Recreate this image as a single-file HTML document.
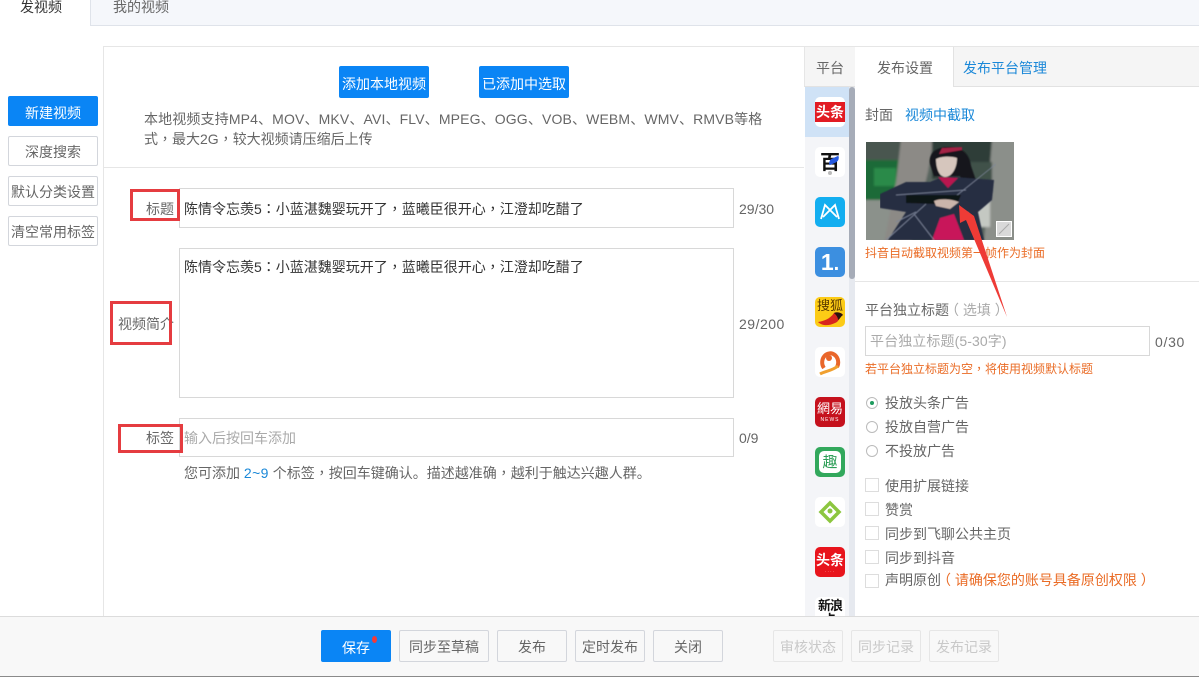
<!DOCTYPE html>
<html lang="zh-Hans"><head><meta charset="utf-8"><title>发视频</title>
<style>
html,body{margin:0;padding:0;background:#fff}
#p{position:relative;width:1199px;height:677px;overflow:hidden;background:#fff;font:14px/20px "Liberation Sans","Noto Sans CJK SC",sans-serif;color:#666}
#p div{position:absolute;box-sizing:border-box}
.t{white-space:nowrap}
.q{font-family:"Noto Sans CJK TC",sans-serif}
.btn{text-align:center;border-radius:2px;border:1px solid #d3d6dc;color:#666;white-space:nowrap}
.blue{background:#0a85f5;color:#fff;border:0}
.inp{border:1px solid #d8d8d8;background:#fff}
.red{border:3px solid #e53c40}
.ic{width:30px;height:30px;border-radius:5px;left:815px;text-align:center;font-weight:bold;overflow:hidden;white-space:nowrap}
.off{color:#c9c9c9;border-color:#e6e6e6}
.r{width:12px;height:12px;border:1px solid #bbb;border-radius:50%;left:866px;background:#fff}
.c{width:14px;height:14px;border:1px solid #ddd;left:865px;background:#fff}
.org{color:#ea6c26}
</style></head><body><div id="p">
<!-- top tabs -->
<div style="left:90px;top:0;width:1109px;height:26px;background:#f5f7fb;border-left:1px solid #dfe3ea;border-bottom:1px solid #dfe3ea"></div>
<div class="t" style="left:20px;top:-3px;color:#333">发视频</div>
<div class="t" style="left:113px;top:-3px">我的视频</div>
<!-- left buttons -->
<div class="btn blue" style="left:8px;top:96px;width:90px;height:30px;line-height:34px">新建视频</div>
<div class="btn" style="left:8px;top:136px;width:90px;height:30px;line-height:30px">深度搜索</div>
<div class="btn" style="left:8px;top:176px;width:90px;height:30px;line-height:30px">默认分类设置</div>
<div class="btn" style="left:8px;top:216px;width:90px;height:30px;line-height:30px">清空常用标签</div>
<!-- main panel -->
<div style="left:103px;top:46px;width:1096px;height:571px;border-left:1px solid #e6e6e6;border-top:1px solid #e6e6e6"></div>
<div class="btn blue" style="left:339px;top:66px;width:90px;height:32px;line-height:36px">添加本地视频</div>
<div class="btn blue" style="left:479px;top:66px;width:90px;height:32px;line-height:36px">已添加中选取</div>
<div class="t" style="left:144px;top:109px;letter-spacing:.14px">本地视频支持MP4、MOV、MKV、AVI、FLV、MPEG、OGG、VOB、WEBM、WMV、RMVB等格</div>
<div class="t" style="left:144px;top:129px">式<span class="q" lang="zh-TW">，</span>最大2G<span class="q" lang="zh-TW">，</span>较大视频请压缩后上传</div>
<div style="left:104px;top:167px;width:700px;height:1px;background:#e6e6e6"></div>
<!-- form -->
<div class="inp" style="left:179px;top:188px;width:555px;height:40px"></div>
<div class="t" style="left:184px;top:199px;color:#333">陈情令忘羡5<span class="q" lang="zh-TW">：</span>小蓝湛魏婴玩开了<span class="q" lang="zh-TW">，</span>蓝曦臣很开心<span class="q" lang="zh-TW">，</span>江澄却吃醋了</div>
<div class="t" style="left:739px;top:199px">29/30</div>
<div class="inp" style="left:179px;top:248px;width:555px;height:150px"></div>
<div class="t" style="left:184px;top:257px;color:#333">陈情令忘羡5<span class="q" lang="zh-TW">：</span>小蓝湛魏婴玩开了<span class="q" lang="zh-TW">，</span>蓝曦臣很开心<span class="q" lang="zh-TW">，</span>江澄却吃醋了</div>
<div class="t" style="left:739px;top:314px;letter-spacing:.5px">29/200</div>
<div class="inp" style="left:179px;top:418px;width:555px;height:39px"></div>
<div class="t" style="left:184px;top:428px;color:#aaa">输入后按回车添加</div>
<div class="t" style="left:739px;top:428px">0/9</div>
<div class="t" style="left:184px;top:463px">您可添加 <span style="color:#1a88d8;letter-spacing:.4px">2~9</span> 个标签<span class="q" lang="zh-TW">，</span>按回车键确认。描述越准确<span class="q" lang="zh-TW">，</span>越利于触达兴趣人群。</div>
<div class="t" style="left:146px;top:199px">标题</div>
<div class="t" style="left:118px;top:314px">视频简介</div>
<div class="t" style="left:146px;top:428px">标签</div>
<div class="red" style="left:130px;top:189px;width:50px;height:32px"></div>
<div class="red" style="left:110px;top:301px;width:62px;height:44px"></div>
<div class="red" style="left:118px;top:424px;width:65px;height:29px"></div>
<!-- right header -->
<div style="left:804px;top:47px;width:395px;height:40px;background:#f5f5f5;border-bottom:1px solid #e2e2e2;border-left:1px solid #e6e6e6"></div>
<div style="left:855px;top:47px;width:99px;height:40px;background:#fff;border-right:1px solid #e2e2e2"></div>
<div class="t" style="left:816px;top:58px">平台</div>
<div class="t" style="left:877px;top:58px">发布设置</div>
<div class="t" style="left:963px;top:58px;color:#1a88d8">发布平台管理</div>
<!-- platform column -->
<div style="left:805px;top:87px;width:45px;height:530px;background:#f4f5f8"></div>
<div style="left:805px;top:87px;width:44px;height:50px;background:#cfe2f6"></div>
<div style="left:849px;top:87px;width:6px;height:530px;background:#e6e9ef"></div>
<div style="left:849px;top:87px;width:6px;height:192px;background:#a6acb8;border-radius:3px"></div>
<!-- icons -->
<div class="ic" style="top:97px;background:#fff"><div style="left:0;top:5px;width:30px;height:20px;background:#e21b23;color:#fff;font-size:14px;line-height:20px">头条</div></div>
<div class="ic" style="top:147px;background:#fff"><div style="left:0;top:3px;width:30px;color:#111;font:bold 20px/22px 'Noto Sans CJK SC',sans-serif">百</div><div style="left:13px;top:11px;width:12px;height:5px;background:#2458e0;border-radius:6px 0;transform:rotate(-25deg)"></div><div style="left:13px;top:24px;width:4px;height:4px;border-radius:50%;background:#bbb"></div></div>
<div class="ic" style="top:197px;background:#13aef0"><svg style="position:absolute;left:0;top:0" width="30" height="30"><path d="M6 22L10 8L15 13L20 8L24 22M10 8L22 20M20 8L8 20" fill="none" stroke="#fff" stroke-width="1.8"/></svg></div>
<div class="ic" style="top:247px;background:#3c8fe0;color:#fff;font:bold 23px/30px 'Liberation Sans',sans-serif">1<span style="font-size:20px">.</span></div>
<div class="ic" style="top:297px;background:#fccb16"><div style="left:0;top:1px;width:30px;color:#5a3a00;font-size:13px;line-height:15px;font-weight:normal">搜狐</div><svg style="position:absolute;left:0;top:0" width="30" height="30"><path d="M3 25C9 24 15 22 19 16C21 15 26 15 28 18C25 19 24 25 20 26C14 29 7 29 3 25Z" fill="#d8261c"/><path d="M19 16C21 15 26 15 28 18C26 19 25 22 23 23C23 20 21 18 19 16Z" fill="#2a1410"/></svg></div>
<div class="ic" style="top:347px;background:#fff"><svg style="position:absolute;left:0;top:0" width="30" height="30"><path d="M9 21A8 9 0 1 1 22 20" fill="none" stroke="#e9662a" stroke-width="4"/><circle cx="14" cy="11" r="3" fill="#e9662a"/><path d="M5 27C10 24 17 24 23 19" fill="none" stroke="#f0a030" stroke-width="3"/></svg></div>
<div class="ic" style="top:397px;background:#c5111d;color:#fff"><div style="left:0;top:3px;width:30px;font-size:13px;line-height:18px;font-weight:normal">網易</div><div style="left:0;top:20px;width:30px;font:5px/7px 'Liberation Sans',sans-serif;letter-spacing:1px">NEWS</div></div>
<div class="ic" style="top:447px;background:#32a85c"><div style="left:4px;top:4px;width:22px;height:22px;background:#fff;border-radius:5px;color:#2d9e57;font:normal 15px/22px 'Noto Sans CJK SC',sans-serif">趣</div></div>
<div class="ic" style="top:497px;background:#fff"><svg style="position:absolute;left:0;top:0" width="30" height="30"><path d="M15 6L24 15L15 24L6 15Z" fill="none" stroke="#8cc63f" stroke-width="3.5"/><circle cx="15" cy="14" r="2.5" fill="#8cc63f"/></svg></div>
<div class="ic" style="top:547px;background:#e8141c;color:#fff"><div style="left:0;top:3px;width:30px;font-size:14px;line-height:20px">头条</div><div style="left:0;top:22px;width:30px;font:5px/6px 'Liberation Sans',sans-serif;letter-spacing:1px;color:#ffb0b0">····</div></div>
<div class="ic" style="top:597px;height:20px;background:#fff;border-radius:5px 5px 0 0;color:#111"><div style="left:0;top:1px;width:30px;font-size:13px;line-height:15px;letter-spacing:-1px">新浪</div><div style="left:0;top:15px;width:30px;font-size:13px;line-height:15px">卡</div></div>
<!-- settings -->
<div class="t" style="left:865px;top:105px">封面</div>
<div class="t" style="left:905px;top:105px;color:#1a88d8">视频中截取</div>
<svg style="position:absolute;left:866px;top:142px" width="148" height="98" viewBox="0 0 148 98">
<defs><filter id="b" x="0" y="0" width="100%" height="100%"><feGaussianBlur stdDeviation="1.1"/></filter><filter id="s" x="0" y="0" width="100%" height="100%"><feGaussianBlur stdDeviation=".5"/></filter><clipPath id="k"><rect width="148" height="98"/></clipPath></defs>
<g clip-path="url(#k)">
<g filter="url(#b)">
<rect x="-3" y="-3" width="154" height="104" fill="#59655e"/>
<rect x="-3" y="-3" width="50" height="25" fill="#4a5750"/>
<rect x="-3" y="18" width="42" height="40" fill="#1c6b38"/>
<rect x="8" y="26" width="22" height="18" fill="#2a8a48"/>
<rect x="-3" y="58" width="34" height="44" fill="#8b918b"/>
<path d="M35 -3H68L62 30L45 101H18L30 40Z" fill="#8c8a86"/>
<rect x="66" y="-3" width="62" height="40" fill="#2d3d38"/>
<path d="M126 -3H151V101H118Z" fill="#8b8f8a"/>
<rect x="106" y="55" width="18" height="30" fill="#c4c8c2"/>
<path d="M100 20H126V50H104Z" fill="#3f5148"/>
</g>
<g filter="url(#s)">
<path d="M64 22C62 10 72 4 86 5C98 6 104 14 105 24L114 50L100 48L94 34L68 34Z" fill="#14161b"/>
<path d="M73 12L96 8L96 5L76 6Z" fill="#a32045"/>
<path d="M70 17C75 14 86 14 91 16C91 26 86 35 79 35C74 35 70 28 70 17Z" fill="#d6c6bd"/>
<path d="M64 40L76 35L88 35L128 38L126 58L112 70L118 98H22L40 70L14 66L14 52L40 40Z" fill="#262d42"/>
<path d="M72 35L82 46L92 36Z" fill="#b8154f"/>
<path d="M74 76L88 72L98 98H66Z" fill="#c8185a"/>
<path d="M30 53L100 48M20 98L60 62M85 58L130 22M48 72L68 98M102 70L110 98M30 80L50 70" stroke="#7d869b" stroke-width=".8" fill="none"/>
<path d="M40 53H95L92 60L70 62L40 61Z" fill="#111318"/>
<path d="M68 59C74 56 86 57 93 60L84 67L70 64Z" fill="#cbb5ab"/>
</g>
<rect x="130.500" y="79.500" width="15" height="15" fill="#e6e6e6" fill-opacity=".85" stroke="#fff"/>
<path d="M133 92L143 82" stroke="#aaa"/>
</g>
</svg>
<div class="t org" style="left:865px;top:245px;font-size:12px;line-height:17px">抖音自动截取视频第一帧作为封面</div>
<div style="left:855px;top:281px;width:344px;height:1px;background:#e6e6e6"></div>
<div class="t" style="left:865px;top:300px">平台独立标题<span style="color:#aaa;margin-left:-4px">（ 选填 ）</span></div>
<div class="inp" style="left:865px;top:326px;width:285px;height:30px"></div>
<div class="t" style="left:870px;top:331px;color:#aaa;letter-spacing:.1px">平台独立标题(5-30字)</div>
<div class="t" style="left:1155px;top:332px;letter-spacing:.7px">0/30</div>
<div class="t org" style="left:865px;top:360px;font-size:12px;line-height:17px">若平台独立标题为空<span class="q" lang="zh-TW">，</span>将使用视频默认标题</div>
<div class="r" style="top:397px"></div><div style="left:870px;top:401px;width:4px;height:4px;border-radius:50%;background:#1e9b5e"></div>
<div class="t" style="left:885px;top:393px">投放头条广告</div>
<div class="r" style="top:421px"></div><div class="t" style="left:885px;top:417px">投放自营广告</div>
<div class="r" style="top:445px"></div><div class="t" style="left:885px;top:441px">不投放广告</div>
<div class="c" style="top:478px"></div><div class="t" style="left:885px;top:476px">使用扩展链接</div>
<div class="c" style="top:502px"></div><div class="t" style="left:885px;top:500px">赞赏</div>
<div class="c" style="top:526px"></div><div class="t" style="left:885px;top:524px">同步到飞聊公共主页</div>
<div class="c" style="top:550px"></div><div class="t" style="left:885px;top:548px">同步到抖音</div>
<div class="c" style="top:574px"></div><div class="t" style="left:885px;top:570px">声明原创<span class="org" style="margin-left:-4px">（ 请确保您的账号具备原创权限 ）</span></div>
<!-- arrow -->
<svg style="position:absolute;left:950px;top:200px" width="70" height="125"><path d="M9 5L10 23L16 20L57 117L24 16Z" fill="#ee3b36"/></svg>
<!-- footer -->
<div style="left:0;top:616px;width:1199px;height:61px;background:#f8f8f8;border-top:1px solid #dcdcdc;border-bottom:1px solid #8a8a8a"></div>
<div class="btn blue" style="left:321px;top:630px;width:70px;height:32px;line-height:36px">保存</div>
<div style="left:372px;top:636px;width:5px;height:7px;border-radius:50%;background:#f23a3a"></div>
<div class="btn" style="left:399px;top:630px;width:90px;height:32px;line-height:33px">同步至草稿</div>
<div class="btn" style="left:497px;top:630px;width:70px;height:32px;line-height:33px">发布</div>
<div class="btn" style="left:575px;top:630px;width:70px;height:32px;line-height:33px">定时发布</div>
<div class="btn" style="left:653px;top:630px;width:70px;height:32px;line-height:33px">关闭</div>
<div class="btn off" style="left:773px;top:630px;width:70px;height:32px;line-height:33px">审核状态</div>
<div class="btn off" style="left:851px;top:630px;width:70px;height:32px;line-height:33px">同步记录</div>
<div class="btn off" style="left:929px;top:630px;width:70px;height:32px;line-height:33px">发布记录</div>
</div></body></html>
